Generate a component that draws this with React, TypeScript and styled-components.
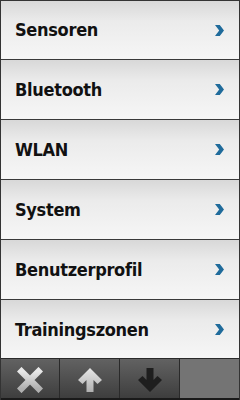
import React from 'react'
import styled, { createGlobalStyle } from 'styled-components'

const GlobalStyle = createGlobalStyle`
  html, body {
    margin: 0;
    padding: 0;
    background: #ffffff;
  }
`

const items = ['Sensoren', 'Bluetooth', 'WLAN', 'System', 'Benutzerprofil', 'Trainingszonen']

function Chevron() {
  return (
    <svg width='9' height='11' viewBox='0 0 9 11'>
      <path d='M0 0 L4.8 0 L9 5.5 L4.8 11 L0 11 L4.2 5.5 Z' fill='#1f6b9b' />
    </svg>
  )
}

function CloseIcon() {
  return (
    <svg width='26' height='26' viewBox='0 0 26 26'>
      <defs>
        <linearGradient id='xg' x1='0' y1='0' x2='0' y2='1'>
          <stop offset='0' stopColor='#e8e8e8' />
          <stop offset='1' stopColor='#b0b0b0' />
        </linearGradient>
      </defs>
      <path d='M4.5 4.5 L21.5 21.5 M21.5 4.5 L4.5 21.5' stroke='url(#xg)' strokeWidth='6.5' strokeLinecap='square' />
    </svg>
  )
}

function ArrowIcon({ down, color }: { down?: boolean; color: string }) {
  return (
    <svg width='26' height='26' viewBox='0 0 26 26' style={down ? { transform: 'rotate(180deg)' } : undefined}>
      <defs>
        <linearGradient id='ag' x1='0' y1='0' x2='0' y2='1'>
          <stop offset='0' stopColor='#e8e8e8' />
          <stop offset='1' stopColor='#b0b0b0' />
        </linearGradient>
      </defs>
      <path
        d='M13 1 L25 13 L20.5 17 L16.5 13 L16.5 25 L9.5 25 L9.5 13 L5.5 17 L1 13 Z'
        fill={color}
      />
    </svg>
  )
}

function App() {
  return (
    <>
      <GlobalStyle />
      <Screen>
        <List>
          {items.map((label) => (
            <Row key={label}>
              <Label>{label}</Label>
              <Chevron />
            </Row>
          ))}
        </List>
        <Toolbar>
          <ToolButton><CloseIcon /></ToolButton>
          <ToolButton><ArrowIcon color='url(#ag)' /></ToolButton>
          <ToolButton><ArrowIcon down color='#1e1e1e' /></ToolButton>
          <ToolButton $empty />
        </Toolbar>
      </Screen>
    </>
  )
}

const Screen = styled.div`
  width: 240px;
  height: 400px;
  box-sizing: border-box;
  border: 1px solid #333;
  border-bottom: none;
  display: flex;
  flex-direction: column;
  overflow: hidden;
  font-family: "DejaVu Sans Condensed", "DejaVu Sans", sans-serif;
`

const List = styled.div`
  flex: 1;
  display: flex;
  flex-direction: column;
  overflow: hidden;
`

const Row = styled.div`
  flex: none;
  height: 60px;
  box-sizing: border-box;
  border-bottom: 1px solid #3a3a3a;
  background: linear-gradient(to bottom, #d8d8d8 0%, #ebebeb 35%, #f6f6f6 100%);
  display: flex;
  align-items: center;
  justify-content: space-between;
  padding: 0 15px 0 14px;

  &:first-child {
    height: 59px;
  }
`

const Label = styled.span`
  font-size: 18px;
  font-weight: bold;
  color: #111;
  letter-spacing: -0.3px;
  margin-top: -1px;
`

const Toolbar = styled.div`
  flex: none;
  height: 42px;
  box-sizing: border-box;
  border-top: 1px solid #2a2a2a;
  border-bottom: 2px solid #1a1a1a;
  display: flex;
  margin: 0 -1px;
`

const ToolButton = styled.div<{ $empty?: boolean }>`
  width: 60px;
  display: flex;
  align-items: center;
  justify-content: center;
  padding-top: 2px;
  box-sizing: border-box;
  border-right: 1px solid #2a2a2a;
  background: ${(p) => (p.$empty ? '#747474' : 'linear-gradient(to bottom, #626262, #3e3e3e)')};

  &:last-child {
    border-right: none;
    flex: 1;
  }
`

export default App
